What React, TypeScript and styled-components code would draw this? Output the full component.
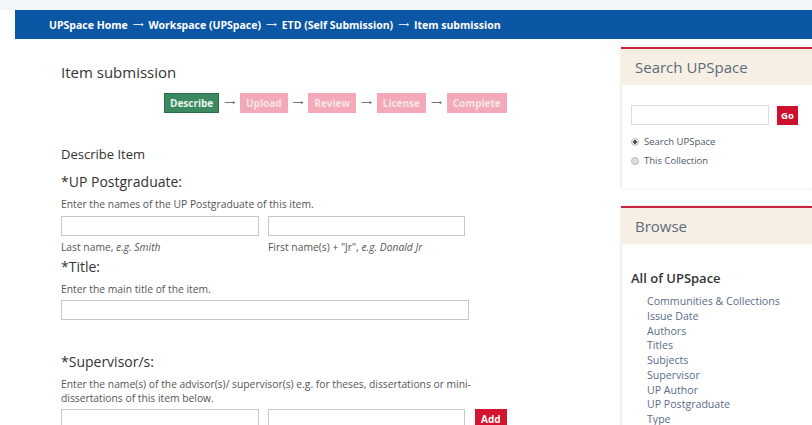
import styled, { createGlobalStyle } from "styled-components";

const GlobalStyle = createGlobalStyle`
    html, body {
        margin: 0;
        padding: 0;
        background: #fff;
        font-family: "Open Sans", "Liberation Sans", sans-serif;
        color: #333;
        overflow: hidden;
    }
`;

const Page = styled.div`
    width: 812px;
    height: 425px;
    overflow: hidden;
    background: #fff;
`;
const TopStrip = styled.div`
    height: 10px;
    background: #f1f6fa;
`;
const Crumbs = styled.nav`
    margin-left: 15px;
    height: 29px;
    display: flex;
    align-items: center;
    gap: 5px;
    padding-left: 34px;
    background: #0b56a5;
    color: #fff;
    font-size: 10.5px;
    font-weight: 700;
    white-space: nowrap;
`;
// long arrow glyph from DejaVu, Open Sans has none
const Arrow = styled.span`
    font-family: "DejaVu Sans", sans-serif;
    font-weight: 400;
    font-size: 7.5px;
    line-height: 1;
`;

const Body = styled.div`
    display: flex;
    align-items: flex-start;
`;
const Main = styled.main`
    width: 560px;
    padding-left: 61px;
`;
const PageTitle = styled.h1`
    margin: 23px 0 0;
    font-size: 15px;
    font-weight: 400;
    line-height: 20px;
`;
const Steps = styled.div`
    display: flex;
    align-items: center;
    gap: 5px;
    margin: 11px 0 0 103px;
`;
const Step = styled.span<{ $active?: boolean }>`
    display: inline-block;
    height: 20px;
    line-height: 18px;
    padding: 0 5px;
    box-sizing: border-box;
    font-size: 10px;
    font-weight: 700;
    background: ${({ $active }) => ($active ? "#3b8a5f" : "#f3a9b8")};
    border: 1px solid ${({ $active }) => ($active ? "#2d6e4a" : "#f3a9b8")};
    color: ${({ $active }) => ($active ? "#e8f3ec" : "#fbe3e8")};
`;
const StepArrow = styled(Arrow)`
    color: #555;
`;
const SectionTitle = styled.h2`
    margin: 32px 0 0;
    font-size: 13px;
    font-weight: 400;
    line-height: 18px;
`;
const FieldLabel = styled.h3<{ $gap: number }>`
    margin: ${({ $gap }) => $gap}px 0 0;
    font-size: 14px;
    font-weight: 400;
    line-height: 18px;
`;
const Help = styled.p`
    margin: 7px 0 0;
    font-size: 10.3px;
    line-height: 13.5px;
    color: #555;
`;
const InputRow = styled.div`
    display: flex;
    align-items: flex-start;
    gap: 9px;
    margin-top: 4px;
`;
const TextBox = styled.input<{ $w: number }>`
    width: ${({ $w }) => $w}px;
    height: 20px;
    box-sizing: border-box;
    border: 1px solid #c8c8c8;
    padding: 0 4px;
    background: #fff;
    margin: 0;
`;
const SubHints = styled.div`
    display: flex;
    font-size: 10.3px;
    line-height: 14px;
    color: #555;
    margin-top: 4px;
    span {
        width: 207px;
    }
`;
const AddBtn = styled.button`
    margin-left: 1px;
    height: 20px;
    padding: 0 6px;
    border: none;
    background: #d2142f;
    color: #fff;
    font-family: inherit;
    font-size: 10px;
    font-weight: 700;
`;

const Side = styled.aside`
    flex: 1;
    margin-top: 8px;
`;
const Panel = styled.section<{ $gap?: number }>`
    margin-top: ${({ $gap }) => $gap ?? 0}px;
    box-shadow: 0 0 3px rgba(0, 0, 0, 0.12);
`;
const PanelHead = styled.div`
    height: 36px;
    display: flex;
    align-items: center;
    padding-left: 14px;
    border-top: 2px solid #c8243a;
    background: #f7efe3;
    color: #5b6b7c;
    font-size: 15px;
`;
const PanelBody = styled.div<{ $h: number }>`
    height: ${({ $h }) => $h}px;
    padding: 0 9px;
    background: #fff;
    border-left: 1px solid #eee;
`;
const SearchRow = styled.div`
    display: flex;
    align-items: center;
    gap: 8px;
    padding-top: 20px;
`;
const SearchBox = styled.input`
    width: 138px;
    height: 20px;
    box-sizing: border-box;
    border: 1px solid #ddd;
    margin: 0;
`;
const GoBtn = styled.button`
    height: 19px;
    padding: 0 4px;
    border: none;
    background: #cf102d;
    color: #fff;
    font-family: inherit;
    font-size: 9.5px;
    font-weight: 700;
`;
const Radio = styled.label`
    display: flex;
    align-items: center;
    gap: 5px;
    font-size: 9.5px;
    color: #4d5a6a;
    line-height: 19px;
    &:first-of-type {
        margin-top: 7px;
    }
`;
const Dot = styled.span<{ $on?: boolean }>`
    width: 8px;
    height: 8px;
    border-radius: 50%;
    box-sizing: border-box;
    border: 1px solid #bbb;
    background: ${({ $on }) =>
        $on ? "radial-gradient(circle, #555 0 1.6px, #e8e8e8 2px)" : "#ddd"};
`;
const BrowseTitle = styled.h4`
    margin: 0;
    padding-top: 25px;
    font-size: 13px;
    font-weight: 600;
    line-height: 18px;
    color: #333;
`;
const LinkList = styled.ul`
    list-style: none;
    margin: 7px 0 0;
    padding-left: 16px;
    li {
        font-size: 10.6px;
        line-height: 14.75px;
        color: #5a6d8a;
        white-space: nowrap;
    }
`;

const browseLinks = [
    "Communities & Collections",
    "Issue Date",
    "Authors",
    "Titles",
    "Subjects",
    "Supervisor",
    "UP Author",
    "UP Postgraduate",
    "Type",
];

function App() {
    return (
        <>
            <GlobalStyle />
            <Page>
                <TopStrip />
                <Crumbs>
                    <span>UPSpace Home</span>
                    <Arrow>⟶</Arrow>
                    <span>Workspace (UPSpace)</span>
                    <Arrow>⟶</Arrow>
                    <span>ETD (Self Submission)</span>
                    <Arrow>⟶</Arrow>
                    <span>Item submission</span>
                </Crumbs>
                <Body>
                    <Main>
                        <PageTitle>Item submission</PageTitle>
                        <Steps>
                            <Step $active>Describe</Step>
                            <StepArrow>⟶</StepArrow>
                            <Step>Upload</Step>
                            <StepArrow>⟶</StepArrow>
                            <Step>Review</Step>
                            <StepArrow>⟶</StepArrow>
                            <Step>License</Step>
                            <StepArrow>⟶</StepArrow>
                            <Step>Complete</Step>
                        </Steps>

                        <SectionTitle>Describe Item</SectionTitle>

                        <FieldLabel $gap={10}>*UP Postgraduate:</FieldLabel>
                        <Help>Enter the names of the UP Postgraduate of this item.</Help>
                        <InputRow>
                            <TextBox $w={198} />
                            <TextBox $w={197} />
                        </InputRow>
                        <SubHints>
                            <span>Last name, <i>e.g. Smith</i></span>
                            <span>First name(s) + "Jr", <i>e.g. Donald Jr</i></span>
                        </SubHints>

                        <FieldLabel $gap={4}>*Title:</FieldLabel>
                        <Help>Enter the main title of the item.</Help>
                        <InputRow>
                            <TextBox $w={408} />
                        </InputRow>

                        <FieldLabel $gap={33}>*Supervisor/s:</FieldLabel>
                        <Help>
                            Enter the name(s) of the advisor(s)/ supervisor(s) e.g. for theses, dissertations or mini-
                            <br />
                            dissertations of this item below.
                        </Help>
                        <InputRow>
                            <TextBox $w={198} />
                            <TextBox $w={197} />
                            <AddBtn>Add</AddBtn>
                        </InputRow>
                    </Main>

                    <Side>
                        <Panel>
                            <PanelHead>Search UPSpace</PanelHead>
                            <PanelBody $h={103}>
                                <SearchRow>
                                    <SearchBox />
                                    <GoBtn>Go</GoBtn>
                                </SearchRow>
                                <Radio><Dot $on />Search UPSpace</Radio>
                                <Radio><Dot />This Collection</Radio>
                            </PanelBody>
                        </Panel>
                        <Panel $gap={18}>
                            <PanelHead>Browse</PanelHead>
                            <PanelBody $h={200}>
                                <BrowseTitle>All of UPSpace</BrowseTitle>
                                <LinkList>
                                    {browseLinks.map((l) => (
                                        <li key={l}>{l}</li>
                                    ))}
                                </LinkList>
                            </PanelBody>
                        </Panel>
                    </Side>
                </Body>
            </Page>
        </>
    );
}

export default App;
